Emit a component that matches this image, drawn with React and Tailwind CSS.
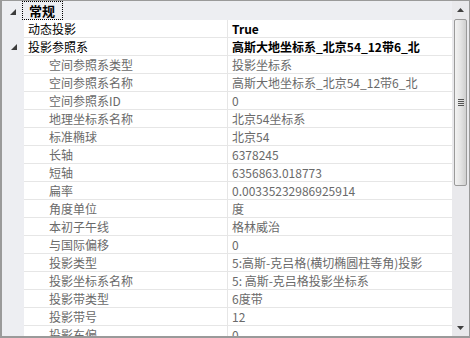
import React from 'react';

const rows = [
  { name: '动态投影', value: 'True', level: 0, bold: true },
  { name: '投影参照系', value: '高斯大地坐标系_北京54_12带6_北', level: 0, bold: true, expander: true },
  { name: '空间参照系类型', value: '投影坐标系', level: 1 },
  { name: '空间参照系名称', value: '高斯大地坐标系_北京54_12带6_北', level: 1 },
  { name: '空间参照系ID', value: '0', level: 1 },
  { name: '地理坐标系名称', value: '北京54坐标系', level: 1 },
  { name: '标准椭球', value: '北京54', level: 1 },
  { name: '长轴', value: '6378245', level: 1 },
  { name: '短轴', value: '6356863.018773', level: 1 },
  { name: '扁率', value: '0.00335232986925914', level: 1 },
  { name: '角度单位', value: '度', level: 1 },
  { name: '本初子午线', value: '格林威治', level: 1 },
  { name: '与国际偏移', value: '0', level: 1 },
  { name: '投影类型', value: '5:高斯-克吕格(横切椭圆柱等角)投影', level: 1 },
  { name: '投影坐标系名称', value: '5: 高斯-克吕格投影坐标系', level: 1 },
  { name: '投影带类型', value: '6度带', level: 1 },
  { name: '投影带号', value: '12', level: 1 },
  { name: '投影东偏', value: '0', level: 1 },
];

const Expander = () => (
  <svg width="6" height="6" viewBox="0 0 6 6" className="block">
    <polygon points="6,0 6,6 0,6" fill="#3c3c3c" />
  </svg>
);

const PropertyGrid = () => {
  return (
    <div
      className="w-[470px] h-[338px] flex border-t border-l-2 border-b-2 border-r border-[#9a9a9a] bg-white overflow-hidden"
      style={{ fontFamily: '"Noto Sans CJK SC", "Noto Sans", sans-serif' }}
    >
      <div className="flex-1 flex flex-col overflow-hidden text-[12px] leading-[17px]">
        {/* category row */}
        <div className="h-[19px] flex shrink-0 items-stretch bg-[#edeef2]">
          <div className="w-[20px] flex items-center justify-center pl-[2px] pt-[2px]">
            <Expander />
          </div>
          <div className="flex items-center border border-dotted border-black pl-[6px] pr-[7px] font-bold text-[13px] text-black">
            常规
          </div>
        </div>
        {rows.map((row, i) => (
          <div key={i} className="h-[18px] flex shrink-0">
            <div className="w-[22px] shrink-0 bg-[#edeef2] flex items-center justify-center pl-[2px]">
              {row.expander && <Expander />}
            </div>
            <div
              className={`w-[204px] shrink-0 border-b border-r border-[#e6e6e6] whitespace-nowrap overflow-hidden ${
                row.level === 0 ? 'pl-[4px] text-black' : 'pl-[25px] text-[#6a6a6a]'
              }`}
            >
              {row.name}
            </div>
            <div
              className={`flex-1 border-b border-[#e6e6e6] pl-[4px] whitespace-nowrap overflow-hidden ${
                row.bold ? 'font-bold text-black' : 'text-[#6a6a6a]'
              }`}
            >
              {row.value}
            </div>
          </div>
        ))}
      </div>

      {/* vertical scrollbar */}
      <div className="w-[17px] shrink-0 bg-[#e9e9ec] flex flex-col items-center">
        <div className="h-[17px] w-full flex items-center justify-center">
          <svg width="7" height="4" viewBox="0 0 7 4">
            <polygon points="3.5,0 7,4 0,4" fill="#404040" />
          </svg>
        </div>
        <div className="mt-[1px] w-[13px] h-[167px] rounded-[2px] border border-[#9a9a9a] bg-gradient-to-r from-[#f2f2f2] via-[#e4e4e4] to-[#cfcfcf] flex items-center justify-center">
          <div className="flex flex-col gap-[1px]">
            <div className="w-[6px] h-[1px] bg-[#555]" />
            <div className="w-[6px] h-[1px] bg-[#555]" />
            <div className="w-[6px] h-[1px] bg-[#555]" />
            <div className="w-[6px] h-[1px] bg-[#555]" />
          </div>
        </div>
        <div className="flex-1" />
        <div className="h-[17px] w-full flex items-center justify-center">
          <svg width="7" height="4" viewBox="0 0 7 4">
            <polygon points="0,0 7,0 3.5,4" fill="#404040" />
          </svg>
        </div>
      </div>
    </div>
  );
};

export default function App() {
  return <PropertyGrid />;
}
